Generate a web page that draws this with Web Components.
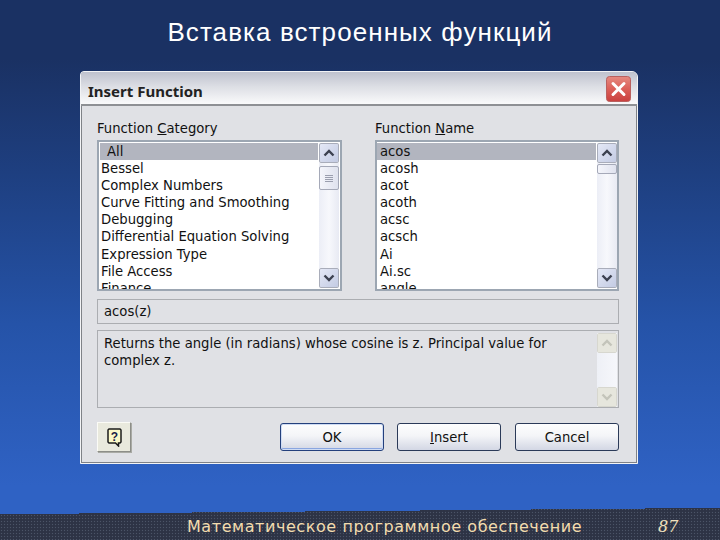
<!DOCTYPE html>
<html>
<head>
<meta charset="utf-8">
<title>Insert Function</title>
<style>
  html, body { margin: 0; padding: 0; background: #1a3163; }
</style>
</head>
<body>
<x-slide>
  <span slot="title">Вставка встроенных функций</span>
  <x-dialog caption="Insert Function">
    <x-field slot="left">
      <span slot="label">Function <u>C</u>ategory</span>
      <x-listbox style="--list-left: 3px; --list-right: 1px" thumb-gap="3" thumb-size="24" grip>
        <x-item selected style="--indent: 7px">All</x-item>
        <x-item style="--indent: 1px">Bessel</x-item>
        <x-item style="--indent: 1px">Complex Numbers</x-item>
        <x-item style="--indent: 1px">Curve Fitting and Smoothing</x-item>
        <x-item style="--indent: 1px">Debugging</x-item>
        <x-item style="--indent: 1px">Differential Equation Solving</x-item>
        <x-item style="--indent: 1px">Expression Type</x-item>
        <x-item style="--indent: 1px">File Access</x-item>
        <x-item style="--indent: 1px">Finance</x-item>
      </x-listbox>
    </x-field>
    <x-field slot="right" style="width: 244px">
      <span slot="label">Function <u>N</u>ame</span>
      <x-listbox style="--list-left: 2px; --list-right: 0px" thumb-gap="1" thumb-size="10">
        <x-item selected style="--indent: 3px">acos</x-item>
        <x-item style="--indent: 3px">acosh</x-item>
        <x-item style="--indent: 3px">acot</x-item>
        <x-item style="--indent: 3px">acoth</x-item>
        <x-item style="--indent: 3px">acsc</x-item>
        <x-item style="--indent: 3px">acsch</x-item>
        <x-item style="--indent: 3px">Ai</x-item>
        <x-item style="--indent: 3px">Ai.sc</x-item>
        <x-item style="--indent: 3px">angle</x-item>
      </x-listbox>
    </x-field>
    <x-signature slot="signature">acos(z)</x-signature>
    <x-description slot="description">Returns the angle (in radians) whose cosine is z. Principal value for complex z.</x-description>
    <x-help-button slot="help"></x-help-button>
    <x-button slot="actions" default>OK</x-button>
    <x-button slot="actions"><u>I</u>nsert</x-button>
    <x-button slot="actions" style="margin-left: 1px">Cancel</x-button>
  </x-dialog>
  <x-footer slot="footer" page="87">Математическое программное обеспечение</x-footer>
</x-slide>

<script>
const UI_FONT = `"DejaVu Sans", Verdana, sans-serif`;

class XSlide extends HTMLElement {
  constructor() {
    super();
    this.attachShadow({mode: 'open'}).innerHTML = `
      <style>
        :host {
          display: flex;
          flex-direction: column;
          width: 720px;
          height: 540px;
          overflow: hidden;
          background: linear-gradient(180deg, #1a3163 0%, #1a3163 11%, #1e3f80 32%, #2553a8 60%, #2f62c4 90%, #2f62c4 100%);
        }
        .title {
          height: 71px;
          box-sizing: border-box;
          padding-top: 15px;
          text-align: center;
          color: #fff;
          font: 26px/34px "Liberation Sans", Arial, sans-serif;
          letter-spacing: 1.08px;
        }
        .middle { flex: 1; padding-left: 80px; }
      </style>
      <div class="title"><slot name="title"></slot></div>
      <div class="middle"><slot></slot></div>
      <slot name="footer"></slot>
    `;
  }
}

class XDialog extends HTMLElement {
  constructor() {
    super();
    this.attachShadow({mode: 'open'}).innerHTML = `
      <style>
        :host {
          display: block;
          box-sizing: border-box;
          width: 558px;
          height: 393px;
          background: #e0e1e5;
          border: 1px solid #f2f3f5;
          border-radius: 4px 6px 0 0;
          box-shadow: inset 0 0 0 1px #7f8287;
          font: 13.2px/17px ${UI_FONT};
          color: #111;
          overflow: hidden;
        }
        .bar {
          display: flex;
          align-items: center;
          justify-content: space-between;
          height: 32px;
          padding: 0 6px 0 7px;
          background: linear-gradient(180deg, #bfc2ce 0%, #dcdee4 45%, #fafafb 100%);
          border-bottom: 2px solid #8e9094;
        }
        .caption { font: 700 15px/17px "Noto Sans", sans-serif; color: #222; padding-top: 6px; }
        .close {
          display: block;
          width: 25px;
          height: 26px;
          margin-top: 1px;
        }
        .body {
          display: flex;
          flex-direction: column;
          padding: 15px 18px 0 16px;
        }
        .lists {
          display: flex;
          justify-content: space-between;
          margin-bottom: 8px;
        }
        .actions {
          display: flex;
          align-items: center;
          margin-top: 14px;
        }
        .right-btns { display: flex; gap: 13px; margin-left: auto; }
      </style>
      <div class="bar">
        <span class="caption"></span>
        <svg class="close" viewBox="0 0 25 26">
          <defs>
            <linearGradient id="red" x1="0" y1="0" x2="0" y2="1">
              <stop offset="0" stop-color="#e58a80"/>
              <stop offset="0.5" stop-color="#dc5f58"/>
              <stop offset="1" stop-color="#c9403f"/>
            </linearGradient>
          </defs>
          <rect x="0.5" y="0.5" width="24" height="25" rx="3" fill="url(#red)" stroke="#b9605f"/>
          <path d="M7 7.500 18 18.500M18 7.500 7 18.500" stroke="#fff" stroke-width="3" stroke-linecap="round"/>
        </svg>
      </div>
      <div class="body">
        <div class="lists"><slot name="left"></slot><slot name="right"></slot></div>
        <slot name="signature"></slot>
        <slot name="description"></slot>
        <div class="actions">
          <slot name="help"></slot>
          <div class="right-btns"><slot name="actions"></slot></div>
        </div>
      </div>
    `;
    this.shadowRoot.querySelector('.caption').textContent = this.getAttribute('caption');
  }
}

class XField extends HTMLElement {
  constructor() {
    super();
    this.attachShadow({mode: 'open'}).innerHTML = `
      <style>
        :host { display: block; width: 245px; }
        .label { height: 16px; line-height: 16px; margin-bottom: 3px; }
      </style>
      <div class="label"><slot name="label"></slot></div>
      <slot></slot>
    `;
  }
}

class XScrollbar extends HTMLElement {
  constructor() {
    super();
    const gap = this.getAttribute('thumb-gap');
    const size = this.getAttribute('thumb-size');
    const thumb = size ? `<div class="thumb" style="margin-top:${gap}px;height:${size}px">${this.hasAttribute('grip') ? '<i></i><i></i><i></i><i></i>' : ''}</div>` : '';
    this.attachShadow({mode: 'open'}).innerHTML = `
      <style>
        :host {
          display: flex;
          flex-direction: column;
          flex: none;
          width: 20px;
          background: linear-gradient(90deg, #eceef6, #f7f8fc 50%, #e8eaf3);
        }
        .btn {
          flex: none;
          height: 20px;
          box-sizing: border-box;
          display: flex;
          align-items: center;
          justify-content: center;
          border: 1px solid #fff;
          outline: 1px solid #a9adba;
          outline-offset: -1px;
          border-radius: 2px;
          background: linear-gradient(135deg, #e4e8f6, #c3cbe3);
        }
        .btn svg { width: 12px; height: 8px; display: block; fill: none; stroke: #3c4150; stroke-width: 2.4; }
        .thumb {
          flex: none;
          box-sizing: border-box;
          display: flex;
          flex-direction: column;
          align-items: center;
          justify-content: center;
          gap: 1px;
          border: 1px solid #a5a9b8;
          border-radius: 2px;
          background: linear-gradient(90deg, #f4f5fb, #dfe2ee);
        }
        .thumb i { display: block; width: 8px; height: 1px; background: #9a9eae; }
        .rest { flex: 1; }
        :host([disabled]) { background: linear-gradient(90deg, #eef0f6, #f6f7fb); }
        :host([disabled]) .btn { background: #e6e6dd; outline-color: #d7d7cf; }
        :host([disabled]) .btn svg { stroke: #c3c4ba; }
      </style>
      <div class="btn"><svg viewBox="0 0 12 8"><path d="M1.500 6.500 6 2l4.500 4.500"/></svg></div>
      ${thumb}
      <div class="rest"></div>
      <div class="btn"><svg viewBox="0 0 12 8"><path d="M1.500 1.500 6 6l4.500-4.500"/></svg></div>
    `;
  }
}

class XListbox extends HTMLElement {
  constructor() {
    super();
    const grip = this.hasAttribute('grip') ? 'grip' : '';
    this.attachShadow({mode: 'open'}).innerHTML = `
      <style>
        :host {
          display: flex;
          box-sizing: border-box;
          height: 151px;
          border: 2px solid #9ca6b2;
          background: #fff;
          padding-right: var(--list-right);
        }
        .rows {
          flex: 1;
          min-width: 0;
          overflow: hidden;
          margin: 1px 1px 0 calc(var(--list-left) - 2px);
        }
        x-scrollbar { margin: 1px 0; }
      </style>
      <div class="rows"><slot></slot></div>
      <x-scrollbar thumb-gap="${this.getAttribute('thumb-gap')}" thumb-size="${this.getAttribute('thumb-size')}" ${grip}></x-scrollbar>
    `;
  }
}

class XItem extends HTMLElement {
  constructor() {
    super();
    this.attachShadow({mode: 'open'}).innerHTML = `
      <style>
        :host {
          display: block;
          height: 17.1px;
          line-height: 17px;
          padding-left: var(--indent);
          white-space: nowrap;
        }
        :host([selected]) { background: #b2b5bf; }
      </style>
      <slot></slot>
    `;
  }
}

class XSignature extends HTMLElement {
  constructor() {
    super();
    this.attachShadow({mode: 'open'}).innerHTML = `
      <style>
        :host {
          display: block;
          box-sizing: border-box;
          height: 25px;
          line-height: 23px;
          padding-left: 6px;
          border: 1px solid #abadb1;
          margin-bottom: 6px;
        }
      </style>
      <slot></slot>
    `;
  }
}

class XDescription extends HTMLElement {
  constructor() {
    super();
    this.attachShadow({mode: 'open'}).innerHTML = `
      <style>
        :host {
          display: flex;
          box-sizing: border-box;
          height: 78px;
          border: 1px solid #abadb1;
        }
        .text { flex: 1; padding: 4px 30px 0 6px; }
        x-scrollbar { margin: 2px 1px 0 0; height: 74px; }
      </style>
      <div class="text"><slot></slot></div>
      <x-scrollbar disabled></x-scrollbar>
    `;
  }
}

class XHelpButton extends HTMLElement {
  constructor() {
    super();
    this.attachShadow({mode: 'open'}).innerHTML = `
      <style>
        :host {
          display: flex;
          align-items: center;
          justify-content: center;
          box-sizing: border-box;
          width: 34px;
          height: 30px;
          background: #e9e9dd;
          border: 1px solid;
          border-color: #fbfbf6 #8d8e88 #8d8e88 #fbfbf6;
          box-shadow: 1px 1px 0 #a9aaa4;
        }
        svg { width: 15px; height: 19px; display: block; }
        text { font: bold 12px "Liberation Sans", sans-serif; fill: #1a1f4a; }
      </style>
      <svg viewBox="0 0 15 19">
        <path d="M2 1h11l1 1v12l-1 1h-1.500v3l-3-3H2l-1-1V2z" fill="#fbf9c8" stroke="#1b1b1b" stroke-width="1.500"/>
        <text x="7.500" y="12.500" text-anchor="middle">?</text>
      </svg>
    `;
  }
}

class XButton extends HTMLElement {
  constructor() {
    super();
    this.attachShadow({mode: 'open'}).innerHTML = `
      <style>
        :host {
          display: flex;
          align-items: center;
          justify-content: center;
          box-sizing: border-box;
          width: 104px;
          height: 28px;
          border: 1px solid #2b3a58;
          border-radius: 3px;
          background: linear-gradient(180deg, #fdfdfe 0%, #f4f5f8 45%, #d3d7e4 100%);
          color: #111;
        }
        :host([default]) {
          box-shadow: inset 0 0 0 1px #cfdcf4, inset 0 -2px 0 #8aa6e0;
          border-color: #24407c;
        }
      </style>
      <slot></slot>
    `;
  }
}

class XFooter extends HTMLElement {
  constructor() {
    super();
    this.attachShadow({mode: 'open'}).innerHTML = `
      <style>
        :host {
          display: flex;
          align-items: center;
          box-sizing: border-box;
          height: 32px;
          padding: 6px 0 0 187px;
          color: #f3dcae;
          font: 16px/20px "DejaVu Sans", Verdana, sans-serif;
          letter-spacing: 0.57px;
          background: radial-gradient(circle, #4b5467 0, #4b5467 30%, transparent 48%) 0 0 / 3px 3px, #2d3345;
          clip-path: polygon(0 6px, 79px 6px, 79px 5px, 192px 5px, 192px 4px, 305px 4px, 305px 3px, 420px 3px, 420px 2px, 531px 2px, 531px 1px, 645px 1px, 645px 0, 720px 0, 720px 32px, 0 32px);
        }
        .text { width: 471px; white-space: nowrap; }
        .page { font: italic 16px/20px "DejaVu Serif", serif; letter-spacing: 0; color: #efe0bc; }
      </style>
      <span class="text"><slot></slot></span>
      <span class="page"></span>
    `;
    this.shadowRoot.querySelector('.page').textContent = this.getAttribute('page');
  }
}

// children first, so the listbox can use x-scrollbar as soon as it renders
customElements.define('x-scrollbar', XScrollbar);
customElements.define('x-item', XItem);
customElements.define('x-listbox', XListbox);
customElements.define('x-field', XField);
customElements.define('x-signature', XSignature);
customElements.define('x-description', XDescription);
customElements.define('x-help-button', XHelpButton);
customElements.define('x-button', XButton);
customElements.define('x-dialog', XDialog);
customElements.define('x-footer', XFooter);
customElements.define('x-slide', XSlide);
</script>
</body>
</html>
